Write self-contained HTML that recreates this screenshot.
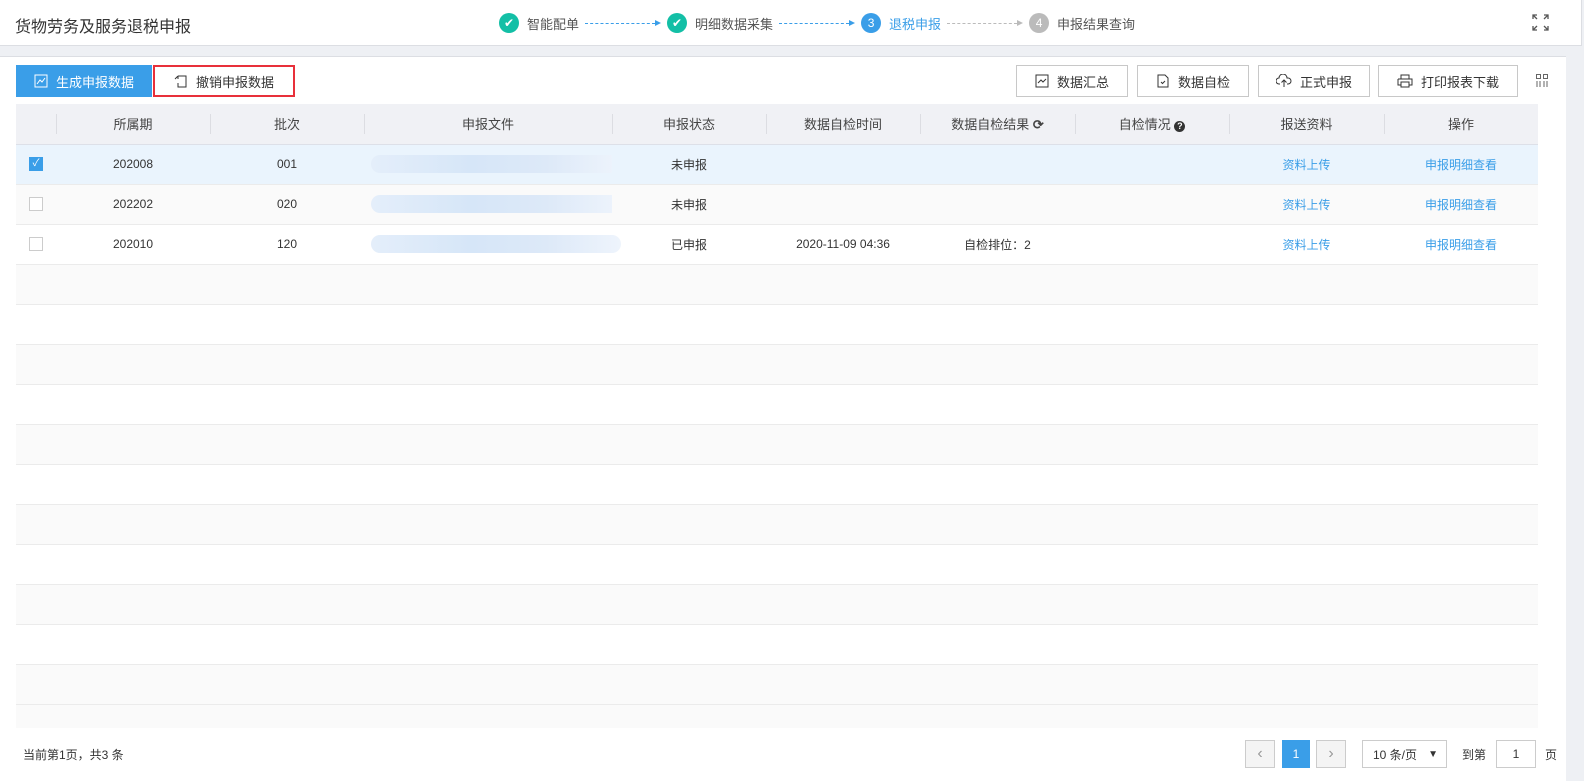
<!DOCTYPE html>
<html><head><meta charset="utf-8"><style>
*{box-sizing:border-box;margin:0;padding:0}
body{width:1584px;height:781px;background:#eef0f4;font-family:"Liberation Sans","Noto Sans CJK SC",sans-serif;font-size:12px;color:#333;position:relative;overflow:hidden}
.top{position:absolute;left:0;top:0;width:1582px;height:46px;background:#fff;border-bottom:1px solid #dcdee3;border-right:1px solid #dcdee3}
.title{position:absolute;left:15px;top:13px;font-size:16px;color:#333}
.steps{position:absolute;left:499px;top:13px;height:20px;display:flex;align-items:center;font-size:13px;color:#555}
.c{width:20px;height:20px;border-radius:50%;display:inline-flex;align-items:center;justify-content:center;color:#fff;font-size:12px;margin-right:8px}
.dash{width:70px;border-top:1px dashed #3a9ee8;margin:0 6px;position:relative}
.dash:after{content:"";position:absolute;right:-6px;top:-4px;border-left:6px solid #3a9ee8;border-top:3.5px solid transparent;border-bottom:3.5px solid transparent}
.dash.g{border-color:#bbb}.dash.g:after{border-left-color:#bbb}
.main{position:absolute;left:0;top:56px;width:1566px;height:725px;background:#fff;border-top:1px solid #dcdee3}
.btn{position:absolute;top:8px;height:32px;border:1px solid #c8c8c8;background:#fff;display:flex;align-items:center;justify-content:center;font-size:13px;color:#333;gap:8px}
table{position:absolute;left:16px;top:47px;width:1522px;border-collapse:collapse;table-layout:fixed}
th{height:40px;background:#f0f1f5;font-weight:normal;font-size:13px;color:#444;position:relative;border-bottom:1px solid #dde0e8}
th+th:before{content:"";position:absolute;left:0;top:10px;height:20px;border-left:1px solid #dcdde2}
td{height:40px;text-align:center;border-bottom:1px solid #ebebeb;font-size:12px}
tr.s td{background:#eaf4fd}
tr.a td{background:#fafafa}
.cb{display:inline-block;width:14px;height:14px;border:1px solid #ccc;background:#fff;vertical-align:middle}
.cb.on{background:#3a9ee8;border-color:#3a9ee8;color:#fff;font-size:10px;line-height:12px}
.blur{display:block;margin-left:7px;height:18px;width:250px;border-radius:9px;background:linear-gradient(90deg,#e4eefa,#d6e6f8 40%,#dde9f8 70%,#eef4fc)}
.lk{color:#3a9ee8}
.pg{position:absolute;top:740px;height:28px;border:1px solid #ccc;display:flex;align-items:center;justify-content:center}
</style></head><body>
<div class="top">
<div class="title">货物劳务及服务退税申报</div>
<div class="steps">
<span class="c" style="background:#13bfa6">✔</span>智能配单<span class="dash"></span>
<span class="c" style="background:#13bfa6;margin-left:6px">✔</span>明细数据采集<span class="dash"></span>
<span class="c" style="background:#3a9ee8;margin-left:6px">3</span><span style="color:#3a9ee8">退税申报</span><span class="dash g"></span>
<span class="c" style="background:#bbb;margin-left:6px">4</span>申报结果查询
</div>
<svg style="position:absolute;left:1532px;top:14px" width="17" height="17" viewBox="0 0 17 17" fill="none" stroke="#555" stroke-width="1.3"><path d="M1 5V1h4M1 1l4 4M12 1h4v4M16 1l-4 4M1 12v4h4M1 16l4-4M16 12v4h-4M16 16l-4-4"/></svg>
</div>
<div class="main">
<div class="btn" style="left:16px;width:136px;background:#3a9ee8;border-color:#3a9ee8;color:#fff"><svg width="14" height="14" viewBox="0 0 14 14" fill="none" stroke="#fff"><rect x="1" y="1" width="12" height="12"/><path d="M3 10l3-4 2 2 3-4"/></svg>生成申报数据</div>
<div class="btn" style="left:153px;width:142px;border:2px solid #e8303a"><svg width="14" height="14" viewBox="0 0 14 14" fill="none" stroke="#333"><path d="M4 2h8v11H4V9M1 5l3-3M4 2v3"/></svg>撤销申报数据</div>
<div class="btn" style="left:1016px;width:112px"><svg width="14" height="14" viewBox="0 0 14 14" fill="none" stroke="#333"><rect x="1" y="1" width="12" height="12"/><path d="M3 9l3-3 2 2 3-3"/></svg>数据汇总</div>
<div class="btn" style="left:1137px;width:112px"><svg width="14" height="14" viewBox="0 0 14 14" fill="none" stroke="#333"><path d="M2 1h7l3 3v9H2z"/><path d="M5 8l1.5 1.5L9 7"/></svg>数据自检</div>
<div class="btn" style="left:1258px;width:112px"><svg width="16" height="14" viewBox="0 0 16 14" fill="none" stroke="#333"><path d="M4 10H3a3 3 0 010-6 4 4 0 018 0h1a3 3 0 010 6h-1M8 13V6M5.5 8.5L8 6l2.5 2.5"/></svg>正式申报</div>
<div class="btn" style="left:1378px;width:140px"><svg width="16" height="14" viewBox="0 0 16 14" fill="none" stroke="#333"><path d="M4 5V1h8v4M1 5h14v6h-3M4 11H1V5M4 8h8v5H4z"/></svg>打印报表下载</div>
<svg style="position:absolute;left:1536px;top:17px" width="12" height="13" viewBox="0 0 12 13" fill="none" stroke="#666"><rect x="0.5" y="0.5" width="4" height="4"/><rect x="7.5" y="0.5" width="4" height="4"/><path d="M1 7v6M4 7v6M8 7v6M11 7v6"/></svg>
<table>
<colgroup><col style="width:40px"><col style="width:154px"><col style="width:154px"><col style="width:248px"><col style="width:154px"><col style="width:154px"><col style="width:155px"><col style="width:154px"><col style="width:155px"><col style="width:154px"></colgroup>
<tr><th></th><th>所属期</th><th>批次</th><th>申报文件</th><th>申报状态</th><th>数据自检时间</th><th>数据自检结果 <b>⟳</b></th><th>自检情况 <span style="display:inline-block;width:11px;height:11px;border-radius:50%;background:#333;color:#fff;font-size:9px;line-height:11px;font-weight:bold">?</span></th><th>报送资料</th><th>操作</th></tr>
<tr class="s"><td><span class="cb on">✓</span></td><td>202008</td><td>001</td><td><span class="blur"></span></td><td>未申报</td><td></td><td></td><td></td><td class="lk">资料上传</td><td class="lk">申报明细查看</td></tr>
<tr class="a"><td><span class="cb"></span></td><td>202202</td><td>020</td><td><span class="blur"></span></td><td>未申报</td><td></td><td></td><td></td><td class="lk">资料上传</td><td class="lk">申报明细查看</td></tr>
<tr><td><span class="cb"></span></td><td>202010</td><td>120</td><td><span class="blur"></span></td><td>已申报</td><td>2020-11-09 04:36</td><td>自检排位：2</td><td></td><td class="lk">资料上传</td><td class="lk">申报明细查看</td></tr>
<tr class="a"><td colspan="10"></td></tr><tr><td colspan="10"></td></tr><tr class="a"><td colspan="10"></td></tr><tr><td colspan="10"></td></tr><tr class="a"><td colspan="10"></td></tr><tr><td colspan="10"></td></tr><tr class="a"><td colspan="10"></td></tr><tr><td colspan="10"></td></tr><tr class="a"><td colspan="10"></td></tr><tr><td colspan="10"></td></tr><tr class="a"><td colspan="10"></td></tr>
<tr><td colspan="10" style="height:24px;border:0;background:#fafafa"></td></tr>
</table>
<div style="position:absolute;left:23px;top:689px;font-size:12px">当前第1页，共3 条</div>
</div>
<div class="pg" style="left:1245px;width:30px;background:#f4f4f4;color:#999;font-size:16px">‹</div>
<div class="pg" style="left:1282px;width:28px;background:#3a9ee8;border-color:#3a9ee8;color:#fff">1</div>
<div class="pg" style="left:1316px;width:30px;background:#f4f4f4;color:#999;font-size:16px">›</div>
<div class="pg" style="left:1362px;width:85px;justify-content:space-between;padding:0 8px 0 10px">10 条/页<span style="font-size:10px">▼</span></div>
<div style="position:absolute;left:1462px;top:746px">到第</div>
<div class="pg" style="left:1496px;width:40px">1</div>
<div style="position:absolute;left:1545px;top:746px">页</div>
</body></html>
